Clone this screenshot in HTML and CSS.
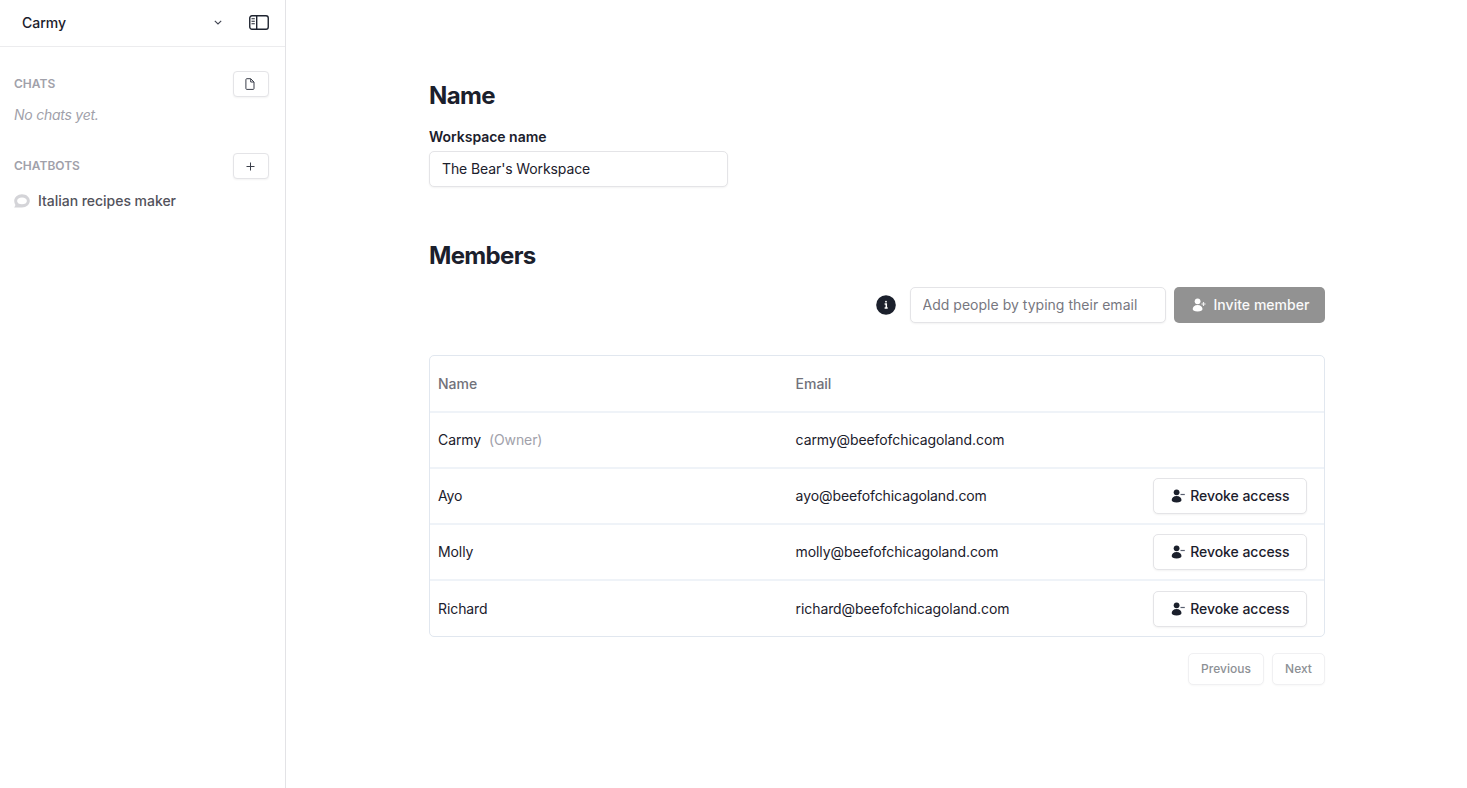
FILE: index.html
```html
<!DOCTYPE html>
<html lang="en">
<head>
<meta charset="utf-8">
<title>Workspace settings</title>
<link rel="stylesheet" href="styles.css">
</head>
<body>
<svg class="symbols" width="0" height="0">
  <symbol id="person" viewBox="0 0 14 14"><circle cx="5.6" cy="3.3" r="2.9"/><path d="M5.6 7C2.6 7 .7 8.9.7 11.1c0 1.7 1.6 2.4 4.9 2.4s4.9-.7 4.9-2.4C10.500 8.900 8.600 7 5.600 7z"/></symbol>
</svg>
<div class="app">
  <aside class="sidebar">
    <header class="account">
      <span class="account-name">Carmy</span>
      <svg class="chevron" width="8" height="5" viewBox="0 0 8 5"><path d="M.8.8 4 4 7.200.8"/></svg>
      <svg class="panel" width="20" height="15" viewBox="0 0 20 15"><rect x=".75" y=".75" width="18.500" height="13.500" rx="2.200"/><path d="M7.700 1v13"/><path class="thin" d="M2.500 3.700h3.300M2.500 6.200h3.300M2.500 8.700h3.300"/></svg>
    </header>
    <section class="group chats">
      <div class="group-head"><h3>CHATS</h3>
        <button class="mini"><svg width="10" height="12" viewBox="0 0 10 12"><path d="M1.800.7h3.900L9 4v6.500a.9.9 0 0 1-.9.9H1.800a.9.9 0 0 1-.9-.9v-8.900a.9.9 0 0 1 .9-.9zM5.700.9v3.100H9"/></svg></button></div>
      <p class="empty">No chats yet.</p>
    </section>
    <section class="group bots">
      <div class="group-head"><h3>CHATBOTS</h3>
        <button class="mini"><svg width="9" height="9" viewBox="0 0 9 9"><path d="M4.500.5v8M.5 4.500h8"/></svg></button></div>
      <a class="bot"><svg width="16" height="14" viewBox="0 0 16 14"><path fill-rule="evenodd" d="M8 .2c4.400 0 7.800 2.900 7.800 6.600S12.400 13.500 8 13.500H.1c.6-.6 1.200-1.400 1.300-2.400C.7 9.800.2 8.500.2 7 .2 3.200 3.600.2 8 .2zM8 3.500C5.200 3.500 3.100 4.900 3.100 6.900S5.200 10.200 8 10.200 12.900 8.900 12.900 6.900 10.800 3.500 8 3.500z"/></svg><span>Italian recipes maker</span></a>
    </section>
  </aside>
  <main class="content">
    <h2>Name</h2>
    <label class="label" for="ws"><span>Workspace name</span></label>
    <input class="field workspace" id="ws" value="The Bear's Workspace">
    <h2 class="members">Members</h2>
    <div class="invite-row">
      <svg class="info" width="20" height="20" viewBox="0 0 20 20"><circle cx="10" cy="10" r="9.800"/><path class="mark" d="M8.600 9h1.700v3.900M8.600 12.900h3.100"/><circle class="dot" cx="10" cy="6.700" r=".9"/></svg>
      <input class="field email" placeholder="Add people by typing their email">
      <button class="invite"><svg width="14" height="14" viewBox="0 0 14 14"><use href="#person"/><path class="sign" d="M11.500 3.900v4.200M9.400 6h4.200"/></svg><span>Invite member</span></button>
    </div>
    <div class="table">
      <div class="row head"><span>Name</span><span>Email</span></div>
      <div class="row"><span>Carmy <em>(Owner)</em></span><span>carmy@beefofchicagoland.com</span></div>
      <div class="row"><span>Ayo</span><span>ayo@beefofchicagoland.com</span><button class="revoke"><svg width="14" height="14" viewBox="0 0 14 14"><use href="#person"/><path class="sign" d="M9.500 5.500h4.300"/></svg><span>Revoke access</span></button></div>
      <div class="row"><span>Molly</span><span>molly@beefofchicagoland.com</span><button class="revoke"><svg width="14" height="14" viewBox="0 0 14 14"><use href="#person"/><path class="sign" d="M9.500 5.500h4.300"/></svg><span>Revoke access</span></button></div>
      <div class="row"><span>Richard</span><span>richard@beefofchicagoland.com</span><button class="revoke"><svg width="14" height="14" viewBox="0 0 14 14"><use href="#person"/><path class="sign" d="M9.500 5.500h4.300"/></svg><span>Revoke access</span></button></div>
    </div>
    <div class="pager"><button class="page prev">Previous</button><button class="page next">Next</button></div>
  </main>
</div>
</body>
</html>
```
FILE: styles.css
```css
* { box-sizing: border-box; }
body { margin: 0; background: #fff; color: #1b202c; font: 14px/20px Inter, "Liberation Sans", sans-serif; letter-spacing: -0.03px; }
button, input { font: inherit; letter-spacing: inherit; color: inherit; margin: 0; }
h2, h3, p { margin: 0; }
svg { flex: none; display: block; }
.symbols { position: absolute; }
.app { display: flex; height: 788px; overflow: hidden; }
.sidebar { width: 286px; flex: none; border-right: 1px solid #e3e3e6; }
.account { display: flex; align-items: center; height: 47px; padding: 0 16px 1px 22px; border-bottom: 1px solid #ececee; font-weight: 500; }
.account-name { flex: 1; }
.chevron { margin-right: 27px; fill: none; stroke: #3f4350; stroke-width: 1.1; }
.panel { fill: none; stroke: #1f2430; stroke-width: 1.4; }
.panel .thin { stroke-width: 1.1; }
.group { padding: 0 16px 0 14px; }
.chats { padding-top: 24px; }
.bots { padding-top: 28px; }
.group-head { display: flex; align-items: center; justify-content: space-between; }
h3 { font-size: 12px; line-height: 16px; font-weight: 600; color: #a1a1aa; letter-spacing: 0; }
.mini { display: flex; align-items: center; justify-content: center; width: 36px; height: 26px; padding: 0 2px 0 0; border: 1px solid #e4e4e7; border-radius: 4px; background: #fff; box-shadow: 0 1px 2px rgba(0,0,0,.05); }
.mini svg { fill: none; stroke: #3b3f4a; stroke-width: 1; }
.empty { margin-top: 8px; color: #a1a1aa; font-style: italic; letter-spacing: -0.25px; }
.bot { display: flex; align-items: center; gap: 8px; margin-top: 12px; font-weight: 500; color: #52525b; }
.bot svg { fill: #d4d4d8; }
.content { width: 896px; margin-left: 143px; padding-top: 80px; }
h2 { font-size: 24px; line-height: 32px; font-weight: 700; letter-spacing: -0.65px; }
.label { display: block; margin-top: 15px; font-weight: 600; }
.field { display: block; height: 36px; padding: 0 12px 1px; border: 1px solid #e4e4e7; border-radius: 5px; background: #fff; box-shadow: 0 1px 2px rgba(0,0,0,.05); outline: none; letter-spacing: -0.11px; }
.field::placeholder { color: #777780; opacity: 1; }
.workspace { width: 298.5px; margin-top: 4px; }
.members { margin-top: 53px; }
.invite-row { display: flex; align-items: center; justify-content: flex-end; margin-top: 15px; }
.info { margin-right: 14px; fill: #1b202c; }
.info .mark { fill: none; stroke: #fff; stroke-width: 1.5; }
.info .dot { fill: #fff; }
.email { width: 256px; margin-right: 8px; letter-spacing: 0.02px; }
.invite { display: flex; align-items: center; gap: 8px; width: 151.5px; height: 36px; padding: 0 0 0 18px; border: 0; border-radius: 5px; background: #929292; color: #fafafa; font-weight: 500; letter-spacing: 0.03px; }
.invite svg { fill: #fff; }
.sign { fill: none; stroke: #596070; stroke-width: 1.2; }
.invite .sign { stroke: #eee; }
.table { margin-top: 32px; height: 282px; border: 1px solid #e1e7ef; border-radius: 5px; letter-spacing: -0.09px; }
.row { display: grid; grid-template-columns: 357.600px 357.600px 1fr; align-items: center; height: 56px; padding-left: 8px; border-bottom: 2px solid #eff3f8; }
.row:last-child { height: 55px; border-bottom: 0; }
.row em { margin-left: 4px; font-style: normal; color: #a1a1aa; }
.row.head { height: 57px; color: #71717a; font-weight: 500; letter-spacing: -0.03px; }
.revoke { display: flex; align-items: center; gap: 5px; width: 153.5px; height: 36px; padding: 0 0 0 17px; border: 1px solid #e4e4e7; border-radius: 5px; background: #fff; box-shadow: 0 1px 2px rgba(0,0,0,.05); font-weight: 500; letter-spacing: -0.04px; }
.revoke svg { fill: #1b202c; }
.pager { display: flex; justify-content: flex-end; gap: 8px; margin-top: 16px; }
.page { height: 32px; padding: 0; border: 1px solid #f0f0f2; border-radius: 5px; background: #fff; box-shadow: 0 1px 2px rgba(0,0,0,.03); font-size: 12px; line-height: 16px; font-weight: 500; color: #8d9095; letter-spacing: 0; }
.prev { width: 76px; }
.next { width: 53px; }
```
